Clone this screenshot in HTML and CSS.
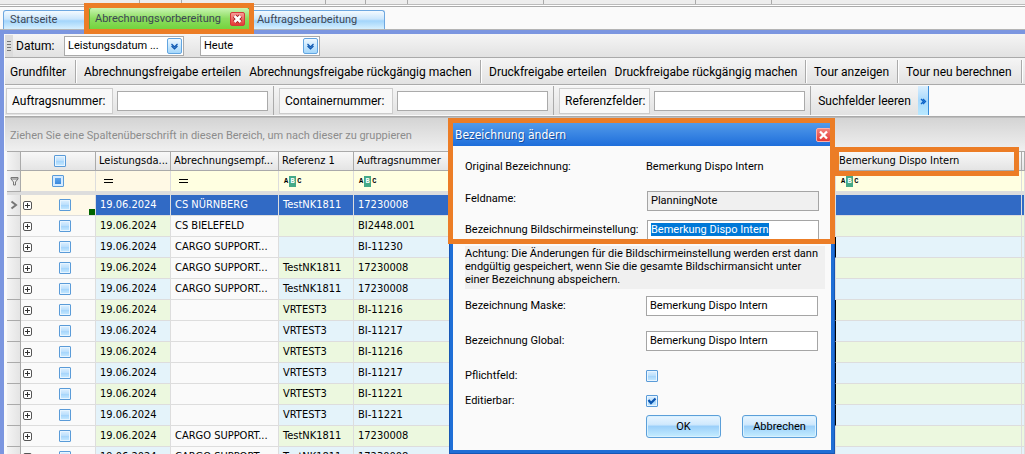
FILE: index.html
```html
<!DOCTYPE html>
<html lang="de">
<head>
<meta charset="utf-8">
<title>Abrechnungsvorbereitung</title>
<link rel="stylesheet" href="styles.css">
</head>
<body>
<div class="app">
<div class="ribbon"><i class="r1"></i><i class="r2"></i><i class="r3"></i><i class="r4"></i><i class="r5"></i><i class="r6"></i><i class="r7"></i><i class="r8"></i></div>
<nav class="tabs">
<button class="tab first">Startseite</button>
<div class="tab active"><button class="tab-label">Abrechnungsvorbereitung</button><button class="close" aria-label="Tab schließen"><svg viewBox="0 0 13 12"><path d="M3.500 3l6 6M9.500 3l-6 6" stroke="#a02020" stroke-width="4.500"/><path d="M3.500 3l6 6M9.500 3l-6 6" stroke="#fff" stroke-width="2.500"/></svg></button></div>
<button class="tab last">Auftragsbearbeitung</button>
</nav>
<main class="work">
<div class="bar filterbar">
<span class="grip"><i></i><i></i><i></i><i></i></span>
<label for="datum">Datum:</label>
<span class="combo date"><select id="datum"><option>Leistungsdatum ...</option></select><span class="drop"><svg viewBox="0 0 13 14"><path d="M3.500 5l3 3 3-3M3.500 7l3 3 3-3" fill="none" stroke="#0b55b0" stroke-width="1.200"/></svg></span></span>
<span class="combo day"><select aria-label="Zeitraum"><option>Heute</option></select><span class="drop"><svg viewBox="0 0 13 14"><path d="M3.500 5l3 3 3-3M3.500 7l3 3 3-3" fill="none" stroke="#0b55b0" stroke-width="1.200"/></svg></span></span>
</div>
<div class="bar actions">
<div class="group g1"><button>Grundfilter</button></div>
<div class="group g2"><button>Abrechnungsfreigabe erteilen</button><button>Abrechnungsfreigabe rückgängig machen</button></div>
<div class="group g3"><button>Druckfreigabe erteilen</button><button>Druckfreigabe rückgängig machen</button></div>
<div class="group g4"><button>Tour anzeigen</button></div>
<div class="group g5"><button>Tour neu berechnen</button></div>
</div>
<div class="bar search">
<div class="field f1"><label for="auftrag">Auftragsnummer:</label><input id="auftrag" type="text"></div>
<div class="field f2"><label for="container">Containernummer:</label><input id="container" type="text"></div>
<div class="field f3"><label for="referenz">Referenzfelder:</label><input id="referenz" type="text"></div>
<button class="clear">Suchfelder leeren</button>
<button class="more" aria-label="Mehr"><svg viewBox="0 0 10 28"><path d="M3 12l2.500 2.500L3 17M5 12l2.500 2.500L5 17" fill="none" stroke="#0b62c8" stroke-width="1.300"/></svg></button>
</div>
<div class="grouping">Ziehen Sie eine Spaltenüberschrift in diesen Bereich, um nach dieser zu gruppieren</div>
<table class="grid">
<colgroup><col class="c-ind"><col class="c-chk"><col class="c-date"><col class="c-recv"><col class="c-ref"><col><col class="c-note"><col class="c-end"></colgroup>
<thead>
<tr class="head"><th></th><th class="center"><input type="checkbox" aria-label="Alle auswählen"></th><th>Leistungsda...</th><th>Abrechnungsempf...</th><th>Referenz 1</th><th>Auftragsnummer</th><th>Bemerkung Dispo Intern</th><th></th></tr>
<tr class="filter"><th class="ind"><svg class="funnel" viewBox="0 0 9 10"><path d="M1 1.500h7v1.500L5.500 6v3h-2V6L1 3zM1 3h7" fill="none" stroke="#777"/></svg></th><td class="center"><input class="mixed" type="checkbox" aria-label="Auswahl filtern"></td><td><span class="eq"></span></td><td class="y"><span class="eq"></span></td><td class="y"><span class="abc">A<b>B</b>C</span></td><td class="y"><span class="abc">A<b>B</b>C</span></td><td class="y"><span class="abc">A<b>B</b>C</span></td><td class="y"></td></tr>
<tr class="gap"><td colspan="8"></td></tr>
</thead>
<tbody>
<tr class="sel"><th><svg class="cur" viewBox="0 0 8 10"><path d="M1.500 1.500L6 5 1.500 8.500" fill="none" stroke="#777" stroke-width="2"/></svg></th><td class="pick"><div><button aria-label="Aufklappen"></button><input type="checkbox" aria-label="Zeile auswählen"></div></td><td>19.06.2024</td><td>CS NÜRNBERG</td><td>TestNK1811</td><td>17230008</td><td></td><td></td></tr>
<tr><th></th><td class="pick"><div><button aria-label="Aufklappen"></button><input type="checkbox" aria-label="Zeile auswählen"></div></td><td>19.06.2024</td><td>CS BIELEFELD</td><td></td><td>BI2448.001</td><td></td><td></td></tr>
<tr class="mark"><th></th><td class="pick"><div><button aria-label="Aufklappen"></button><input type="checkbox" aria-label="Zeile auswählen"></div></td><td>19.06.2024</td><td>CARGO SUPPORT...</td><td></td><td>BI-11230</td><td></td><td></td></tr>
<tr><th></th><td class="pick"><div><button aria-label="Aufklappen"></button><input type="checkbox" aria-label="Zeile auswählen"></div></td><td>19.06.2024</td><td>CARGO SUPPORT...</td><td>TestNK1811</td><td>17230008</td><td></td><td></td></tr>
<tr><th></th><td class="pick"><div><button aria-label="Aufklappen"></button><input type="checkbox" aria-label="Zeile auswählen"></div></td><td>19.06.2024</td><td>CARGO SUPPORT...</td><td>TestNK1811</td><td>17230008</td><td></td><td></td></tr>
<tr class="mark"><th></th><td class="pick"><div><button aria-label="Aufklappen"></button><input type="checkbox" aria-label="Zeile auswählen"></div></td><td>19.06.2024</td><td></td><td>VRTEST3</td><td>BI-11216</td><td></td><td></td></tr>
<tr class="mark"><th></th><td class="pick"><div><button aria-label="Aufklappen"></button><input type="checkbox" aria-label="Zeile auswählen"></div></td><td>19.06.2024</td><td></td><td>VRTEST3</td><td>BI-11217</td><td></td><td></td></tr>
<tr class="mark"><th></th><td class="pick"><div><button aria-label="Aufklappen"></button><input type="checkbox" aria-label="Zeile auswählen"></div></td><td>19.06.2024</td><td></td><td>VRTEST3</td><td>BI-11216</td><td></td><td></td></tr>
<tr class="mark"><th></th><td class="pick"><div><button aria-label="Aufklappen"></button><input type="checkbox" aria-label="Zeile auswählen"></div></td><td>19.06.2024</td><td></td><td>VRTEST3</td><td>BI-11217</td><td></td><td></td></tr>
<tr class="mark"><th></th><td class="pick"><div><button aria-label="Aufklappen"></button><input type="checkbox" aria-label="Zeile auswählen"></div></td><td>19.06.2024</td><td></td><td>VRTEST3</td><td>BI-11221</td><td></td><td></td></tr>
<tr class="mark"><th></th><td class="pick"><div><button aria-label="Aufklappen"></button><input type="checkbox" aria-label="Zeile auswählen"></div></td><td>19.06.2024</td><td></td><td>VRTEST3</td><td>BI-11221</td><td></td><td></td></tr>
<tr><th></th><td class="pick"><div><button aria-label="Aufklappen"></button><input type="checkbox" aria-label="Zeile auswählen"></div></td><td>19.06.2024</td><td>CARGO SUPPORT...</td><td>TestNK1811</td><td>17230008</td><td></td><td></td></tr>
<tr><th></th><td class="pick"><div><button aria-label="Aufklappen"></button><input type="checkbox" aria-label="Zeile auswählen"></div></td><td>19.06.2024</td><td>CARGO SUPPORT...</td><td>TestNK1811</td><td>17230008</td><td></td><td></td></tr>
</tbody>
</table>
</main>
<section class="dialog" role="dialog" aria-labelledby="dlg-title">
<header><h1 id="dlg-title">Bezeichnung ändern</h1><button class="close" aria-label="Schließen"><svg viewBox="0 0 13 12"><path d="M3 2.500l7 7M10 2.500l-7 7" stroke="#fff" stroke-width="2.300"/></svg></button></header>
<form>
<div class="row original"><span>Original Bezeichnung:</span><span>Bemerkung Dispo Intern</span></div>
<div class="row name"><label for="feld">Feldname:</label><input id="feld" type="text" value="PlanningNote" readonly></div>
<div class="row screen"><label for="schirm">Bezeichnung Bildschirmeinstellung:</label><input id="schirm" type="text" value="Bemerkung Dispo Intern"></div>
<p>Achtung: Die Änderungen für die Bildschirmeinstellung werden erst dann endgültig gespeichert, wenn Sie die gesamte Bildschirmansicht unter einer Bezeichnung abspeichern.</p>
<div class="row text"><label for="maske">Bezeichnung Maske:</label><input id="maske" type="text" value="Bemerkung Dispo Intern"></div>
<div class="row text"><label for="global">Bezeichnung Global:</label><input id="global" type="text" value="Bemerkung Dispo Intern"></div>
<div class="row check"><label for="pflicht">Pflichtfeld:</label><input id="pflicht" type="checkbox"></div>
<div class="row check"><label for="edit">Editierbar:</label><span class="tick"><input id="edit" type="checkbox" checked><svg viewBox="0 0 12 12"><path d="M2.500 5l2.500 3 4.500-4.500" fill="none" stroke="#0b55b0" stroke-width="2.200"/></svg></span></div>
<div class="buttons"><button type="button">OK</button><button type="button">Abbrechen</button></div>
</form>
</section>
<div class="mark-box m-tab"></div>
<div class="mark-box m-dialog"></div>
<div class="mark-box m-column"></div>
</div>
<script src="script.js"></script>
</body>
</html>
```
FILE: styles.css
```css
* { box-sizing: border-box; }
body { margin: 0; overflow: hidden; background: #fafafa; color: #000; font: 11px/14px "DejaVu Sans Condensed", "DejaVu Sans", sans-serif; }
button, input, select { font: inherit; color: inherit; margin: 0; padding: 0; border: 0; background: none; border-radius: 0; outline: 0; }
svg { display: block; }
.app { position: relative; height: 100vh; overflow: hidden; display: flex; flex-direction: column; }
.ribbon { height: 7px; flex: none; display: flex; background: #ededed; border-bottom: 1px solid #aaa; box-shadow: inset 0 -1px #fff, inset 0 -2px #bbb; }
.ribbon i { height: 4px; border-right: 1px solid #aaa; }
.r1 { width: 140px; } .r2 { width: 42px; } .r3 { width: 144px; } .r4 { width: 40px; } .r5 { width: 42px; } .r6 { width: 136px; } .r7 { width: 152px; } .r8 { width: 76px; }
.tabs { height: 23px; flex: none; display: flex; align-items: flex-end; border-bottom: 1px solid #b4b4b4; font: 11px/18px Roboto, sans-serif; color: #3c4654; }
.tab { height: 19px; text-align: left; padding-left: 6px; border: 1px solid #6da7e0; border-bottom: 0; border-radius: 3px 3px 0 0; background: linear-gradient(#f4faff, #cbe6fc 45%, #a3d5fb 55%, #d6f0ff); }
.first { width: 86px; margin-left: 3px; }
.active { width: 161px; height: 22px; display: flex; align-items: center; padding: 0 4px 0 5px; justify-content: space-between; border-color: #5dac36; background: linear-gradient(#c9f5b2, #8cdd60 50%, #74d33e); }
.last { width: 135px; }
.close { flex: none; width: 15px; height: 14px; border: 1px solid #d33a3a; border-radius: 2px; background: linear-gradient(#f79a96, #e33a35); }
.work { flex: 1; min-height: 0; border: solid #7b96e0; border-width: 4px 0 0 4px; padding-left: 1px; }
.bar { display: flex; border-bottom: 1px solid #aaa; background: linear-gradient(#f5f5f5, #e2e2e2); font: 12px/18px Roboto, sans-serif; }
.filterbar { height: 24px; align-items: center; }
.grip { width: 8px; height: 22px; display: flex; flex-direction: column; gap: 2px; justify-content: center; background: #dcdcdc; align-items: center; }
.grip i { width: 4px; height: 1px; background: #777; }
.filterbar label { margin-left: 3px; width: 48px; }
.combo { display: flex; align-items: center; background: #fff; border: 1px solid #aaa; height: 20px; position: relative; font-size: 11px; }
.combo select { appearance: none; flex: 1; padding-left: 3px; height: 18px; }
.date { width: 120px; } .day { width: 120px; margin-left: 16px; }
.drop { position: absolute; right: 1px; top: 1px; width: 15px; height: 16px; border: 1px solid #62a5e0; border-radius: 2px; background: linear-gradient(#eef8ff, #a4d7fb); pointer-events: none; }
.actions { height: 27px; padding: 2px 0 1px; }
.group { display: flex; gap: 8px; align-items: center; border-right: 1px solid #aaa; box-shadow: 1px 0 #fff; white-space: nowrap; }
.g1 { width: 71px; padding-left: 5px; }
.g2 { width: 405px; padding-left: 8px; }
.g3 { width: 325px; padding-left: 8px; }
.g4 { width: 92px; padding-left: 8px; }
.g5 { width: 124px; padding-left: 8px; }
.search { height: 32px; padding: 1px 0; background: #fafafa; }
.field { display: flex; align-items: center; border-right: 1px solid #aaa; background: linear-gradient(#f5f5f5, #e2e2e2); }
.field label { height: 26px; line-height: 24px; border: 1px solid #ccc; background: #f8f8f8; padding-left: 5px; white-space: nowrap; }
.field input { width: 151px; height: 20px; border: 1px solid #aaa; background: #fff; margin-left: 4px; padding: 0 3px; }
.f1 { width: 269px; padding-left: 1px; } .f1 label { width: 107px; }
.f2 { width: 280px; padding-left: 5px; } .f2 label { width: 114px; }
.f3 { width: 257px; padding-left: 5px; } .f3 label { width: 91px; }
.clear { width: 107px; background: linear-gradient(#f5f5f5, #e2e2e2); }
.more { width: 11px; height: 29px; border-right: 1px solid #388bd9; background: linear-gradient(#d9eefe, #a8d9fc 50%, #b8e8ff); }
.grouping { height: 34px; padding-left: 5px; border-top: 1px solid #bbb; background: linear-gradient(#d4d4d4, #f0f0f0); color: #8c8c8c; font: 11px/36px Roboto, sans-serif; }
.grid { table-layout: fixed; width: calc(100% - 2px); margin-left: 2px; border-collapse: separate; border-spacing: 0; white-space: nowrap; }
.c-ind { width: 14px; } .c-chk { width: 75px; } .c-date { width: 75px; } .c-recv { width: 108px; } .c-ref { width: 75px; } .c-note { width: 186px; } .c-end { width: 3px; }
.grid th, .grid td { height: 21px; padding: 0 0 0 4px; text-align: left; font-weight: 400; border-right: 1px solid #ddd; border-bottom: 1px solid #ddd; }
.grid .head th { height: 20px; padding-left: 3px; border-color: #aaa; border-top: 1px solid #aaa; background: linear-gradient(#f8f8f8, #e4e4e4); }
.grid .center { text-align: center; padding: 0; }
.grid .center input { vertical-align: middle; }
.filter td { background: #fff9e5; }
.grid .filter td.y { background: #ffffe1; }
.grid tr th:first-child { padding: 0 0 0 3px; border-color: #aaa; background: linear-gradient(90deg, #f4f4f4, #e4e4e4); }
.grid .gap td { height: 3px; background: #ddd; padding: 0; }
.eq { display: block; width: 9px; height: 4px; margin-left: 4px; border: solid #000; border-width: 1px 0; }
.abc { display: flex; align-items: center; gap: 1px; font: bold 7px/9px "Liberation Mono", monospace; padding-left: 1px; }
.abc b { width: 7px; height: 11px; line-height: 11px; text-align: center; color: #fff; background: #45a987; }
.funnel { width: 9px; height: 10px; } .cur { width: 8px; height: 10px; }
tbody td { background: #fafafa; }
tbody td:nth-child(3), tbody td:nth-child(n+5) { background: #ecf8df; }
tbody tr:nth-child(odd) td:nth-child(3), tbody tr:nth-child(odd) td:nth-child(n+5) { background: #e4f3fa; }
tbody tr.sel td.pick { background: #fff9e8 linear-gradient(#006400, #006400) right bottom / 6px 6px no-repeat; }
tbody tr.sel td:nth-child(n+3) { background: #316ac5; color: #fff; }
.mark td:nth-child(6) { border-right-color: #000; }
.pick div { display: flex; align-items: center; justify-content: space-between; padding: 0 24px 0 0; }
.grid .pick { padding-left: 2px; }
.pick button { width: 9px; height: 9px; border: 1px solid #555; border-radius: 2px; background: linear-gradient(#333, #333) center / 5px 1px no-repeat, linear-gradient(#333, #333) center / 1px 5px no-repeat, #fff; }
input[type=checkbox] { appearance: none; width: 12px; height: 12px; border: 1px solid #5a9bd8; border-radius: 1px; background: linear-gradient(#def0ff, #b9defc 50%, #a4d4fb 50%, #c8eaff); box-shadow: inset 0 0 0 1px #e8f5ff; }
input.mixed[type=checkbox] { background: linear-gradient(#6aaef0, #2f80d8); box-shadow: inset 0 0 0 2px #d5ebff; }
.dialog { position: absolute; left: 449px; top: 119px; width: 386px; border: 4px solid #1f6fd6; border-top: 0; outline: 1px solid #1657b5; outline-offset: -1px; background: #fafafa; font-family: Roboto, sans-serif; }
.dialog header { height: 27px; margin: 0 -1px; padding: 4px 1px 0 3px; display: flex; align-items: center; justify-content: space-between; background: linear-gradient(#5ba2ec, #1e6edb); color: #fff; }
.dialog h1 { margin: 0; font: 12px/18px "DejaVu Sans Condensed", sans-serif; text-shadow: 1px 1px #1a4f9c; }
.dialog .close { border-color: #ffb0a8; background: linear-gradient(#f4807a, #e33a35); }
.dialog form { padding: 0 14px 12px 12px; }
.row { display: grid; grid-template-columns: 181px 1fr; align-items: center; }
.row input[type=text] { width: 172px; height: 20px; border: 1px solid #a5a5a5; background: #fff; padding: 0 3px; }
.original { padding-top: 14px; height: 40px; align-items: start; }
.name { height: 29px; } .name label { padding-bottom: 4px; } .row input[readonly] { background: #f0f0f0; }
.name input, .screen input { margin-left: 1px; }
.screen { height: 29px; }
.dialog p { margin: 2px -8px 0 0; padding: 1px 0 0; height: 43px; line-height: 13px; background: #f0f0f0; }
.row.text { height: 35px; } .dialog p + .text { margin-top: -1px; }
.row.check { height: 25px; } .text + .check { margin-top: 5px; }
.tick { position: relative; display: flex; } .tick svg { position: absolute; left: 0; top: 0; width: 12px; height: 12px; pointer-events: none; }
.buttons { display: flex; justify-content: flex-end; gap: 21px; margin-top: 2px; }
.buttons button { width: 75px; height: 23px; border: 1px solid #5b9fd9; border-radius: 3px; box-shadow: inset 0 0 0 1px #d9f1ff; background: linear-gradient(#e8f5ff, #d0e9fd 40%, #9cd0fa 50%, #c5edff); }
::selection { background: #0078d7; color: #fff; }
.mark-box { position: absolute; border: 5px solid #ec7d26; pointer-events: none; }
.m-tab { left: 84px; top: 3px; width: 170px; height: 31px; }
.m-dialog { left: 448px; top: 118px; width: 387px; height: 126px; }
.m-column { left: 834px; top: 147px; width: 185px; height: 29px; }
```
FILE: script.js
```js
const screenLabel = document.getElementById("schirm");
screenLabel.focus();
screenLabel.select();
```
